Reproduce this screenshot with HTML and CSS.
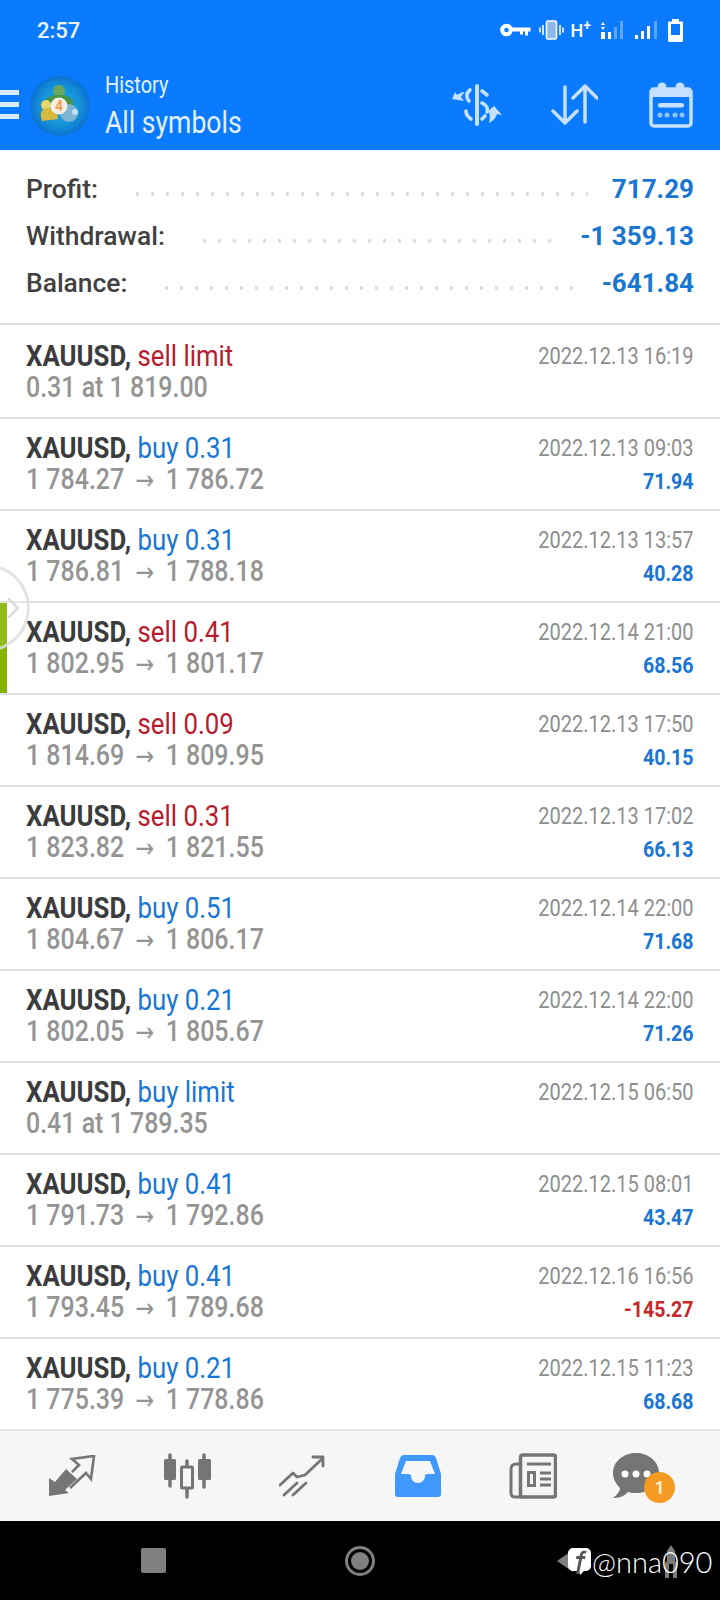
FILE: index.html
```html
<!DOCTYPE html>
<html>
  <head>
    <title>History</title>
    <meta charset="UTF-8"/>
    <link rel="stylesheet" href="styles.css">
  </head>
  <body>
    <div id="screen">
      <header id="top">
        <div class="status">
          <span class="clock">2:57</span>
          <div class="status-icons">
            <svg width="31" height="14" viewBox="0 0 31 14"><circle cx="6.500" cy="7" r="4.300" fill="none" stroke="#fff" stroke-width="4"/><path d="M11 4.500h19.500v4h-2.500v4h-3v-4h-2v3h-3v-3h-9z" fill="#fff"/></svg>
            <svg width="25" height="20" viewBox="0 0 25 20"><rect x="7.500" y="1" width="10" height="18" rx="1.500" fill="#8db8ec" stroke="#fff" stroke-width="1.600"/><path d="M4 5v10M1 7.500v5M21 5v10M24 7.500v5" stroke="#fff" stroke-width="1.600" fill="none"/></svg>
            <span class="net">H<sup>+</sup></span>
            <svg class="sig1" width="22" height="20" viewBox="0 0 22 20"><path d="M0 12h4v7h-4zM0 5l2-3 2 3zM0 7l2 3 2-3z" fill="#fff"/><path d="M7 12h3v7h-3z" fill="#fff"/><path d="M13 7h3v12h-3zM19 1h3v18h-3z" fill="#5ea6f5"/></svg>
            <svg class="sig2" width="22" height="20" viewBox="0 0 22 20"><path d="M0 15h3v4h-3zM6 11h3v8h-3zM12 6h3v13h-3z" fill="#fff"/><path d="M19 1h3v18h-3z" fill="#5ea6f5"/></svg>
            <svg class="batt" width="15" height="23" viewBox="0 0 15 23"><path d="M4 0h7v2.500h3a1 1 0 0 1 1 1v18a1.500 1.500 0 0 1-1.500 1.500h-12a1.500 1.500 0 0 1-1.500-1.500v-18a1 1 0 0 1 1-1h3z" fill="#fff"/><rect x="3" y="5" width="9" height="11" fill="#0a7bff"/></svg>
          </div>
        </div>
        <div class="toolbar">
          <div class="burger"><i></i><i></i><i></i></div>
          <svg class="logo" width="60" height="60" viewBox="0 0 60 60">
            <defs>
              <radialGradient id="lg" cx="50%" cy="50%" r="52%"><stop offset="0" stop-color="#22b0dc"/><stop offset=".65" stop-color="#1590d8"/><stop offset="1" stop-color="#0c6ed0"/></radialGradient>
            </defs>
            <circle cx="30" cy="30" r="30" fill="url(#lg)"/>
            <circle cx="29" cy="15" r="6" fill="#6aa860"/>
            <path d="M14 31c0-9 6-12 15-12s15 3 15 12z" fill="#4a9448"/>
            <circle cx="16" cy="29" r="5" fill="#e8d468"/>
            <path d="M12 45c-3-9 0-13 6-13s10 5 10 11z" fill="#d6ba3e"/>
            <circle cx="39" cy="37" r="9" fill="#7db4d4"/>
            <circle cx="45" cy="36" r="3" fill="#c2e2f2"/>
            <circle cx="29" cy="30" r="8.500" fill="#f4efe6"/>
            <text x="29" y="35" class="logo-num">4</text>
          </svg>
          <div class="titles">
            <div class="sub">History</div>
            <div class="main">All symbols</div>
          </div>
          <div class="actions">
            <svg width="50" height="42" viewBox="0 0 50 42" fill="none" stroke="#c6e0ff" stroke-linecap="round">
              <path d="M25 2v38" stroke-width="4"/>
              <path d="M18 6c-4 3-4 8-1 11M30 7l5 4M30 19c5 2 6 6 5 9M14 27c0 3 2 6 5 8M30 35l3-3" stroke-width="3.600"/>
              <path d="M0 15l12 2-3-4c1-2 2-3 4-5-4 0-6 2-8 3l-2-3z" fill="#c6e0ff" stroke="none"/>
              <path d="M42 22l8 9-5-1c-1 4-4 7-8 9 1-4 1-7 0-11l-4 2z" fill="#c6e0ff" stroke="none"/>
            </svg>
            <svg class="updown" width="47" height="42" viewBox="0 0 47 42" fill="none" stroke="#c6e0ff" stroke-width="3.500" stroke-linecap="round" stroke-linejoin="round">
              <path d="M14 3v36M2 27l12 12 12-12"/>
              <path d="M34 38V2M22 14L34 2l12 12"/>
            </svg>
            <svg width="44" height="46" viewBox="0 0 44 46">
              <rect x="2" y="7" width="40" height="37" rx="3" fill="none" stroke="#c6e0ff" stroke-width="3.500"/>
              <circle cx="13" cy="5" r="4.500" fill="#c6e0ff"/>
              <circle cx="31" cy="5" r="4.500" fill="#c6e0ff"/>
              <rect x="2" y="8" width="40" height="7" fill="#c6e0ff"/>
              <rect x="9" y="21" width="26" height="4.500" rx="2" fill="#c6e0ff"/>
              <circle cx="11" cy="33" r="2.500" fill="#8fc2fb"/><circle cx="18" cy="33" r="2.500" fill="#8fc2fb"/><circle cx="26" cy="33" r="2.500" fill="#8fc2fb"/><circle cx="33" cy="33" r="2.500" fill="#8fc2fb"/>
            </svg>
          </div>
        </div>
      </header>

      <section id="summary">
        <div class="sum-row"><span class="sum-label">Profit:</span><span class="dots"></span><span class="sum-val">717.29</span></div>
        <div class="sum-row"><span class="sum-label">Withdrawal:</span><span class="dots"></span><span class="sum-val">-1 359.13</span></div>
        <div class="sum-row"><span class="sum-label">Balance:</span><span class="dots"></span><span class="sum-val">-641.84</span></div>
      </section>

      <main id="deals">
        <div class="deal">
          <div class="left"><div class="l1"><b>XAUUSD,</b> <span class="red">sell limit</span></div><div class="l2">0.31 at 1 819.00</div></div>
          <div class="right"><div class="date">2022.12.13 16:19</div></div>
        </div>
        <div class="deal">
          <div class="left"><div class="l1"><b>XAUUSD,</b> <span class="blue">buy 0.31</span></div><div class="l2">1 784.27 <em>→</em> 1 786.72</div></div>
          <div class="right"><div class="date">2022.12.13 09:03</div><div class="pl">71.94</div></div>
        </div>
        <div class="deal">
          <div class="left"><div class="l1"><b>XAUUSD,</b> <span class="blue">buy 0.31</span></div><div class="l2">1 786.81 <em>→</em> 1 788.18</div></div>
          <div class="right"><div class="date">2022.12.13 13:57</div><div class="pl">40.28</div></div>
        </div>
        <div class="deal">
          <div class="left"><div class="l1"><b>XAUUSD,</b> <span class="red">sell 0.41</span></div><div class="l2">1 802.95 <em>→</em> 1 801.17</div></div>
          <div class="right"><div class="date">2022.12.14 21:00</div><div class="pl">68.56</div></div>
          <div class="green-bar"></div>
        </div>
        <div class="deal">
          <div class="left"><div class="l1"><b>XAUUSD,</b> <span class="red">sell 0.09</span></div><div class="l2">1 814.69 <em>→</em> 1 809.95</div></div>
          <div class="right"><div class="date">2022.12.13 17:50</div><div class="pl">40.15</div></div>
        </div>
        <div class="deal">
          <div class="left"><div class="l1"><b>XAUUSD,</b> <span class="red">sell 0.31</span></div><div class="l2">1 823.82 <em>→</em> 1 821.55</div></div>
          <div class="right"><div class="date">2022.12.13 17:02</div><div class="pl">66.13</div></div>
        </div>
        <div class="deal">
          <div class="left"><div class="l1"><b>XAUUSD,</b> <span class="blue">buy 0.51</span></div><div class="l2">1 804.67 <em>→</em> 1 806.17</div></div>
          <div class="right"><div class="date">2022.12.14 22:00</div><div class="pl">71.68</div></div>
        </div>
        <div class="deal">
          <div class="left"><div class="l1"><b>XAUUSD,</b> <span class="blue">buy 0.21</span></div><div class="l2">1 802.05 <em>→</em> 1 805.67</div></div>
          <div class="right"><div class="date">2022.12.14 22:00</div><div class="pl">71.26</div></div>
        </div>
        <div class="deal">
          <div class="left"><div class="l1"><b>XAUUSD,</b> <span class="blue">buy limit</span></div><div class="l2">0.41 at 1 789.35</div></div>
          <div class="right"><div class="date">2022.12.15 06:50</div></div>
        </div>
        <div class="deal">
          <div class="left"><div class="l1"><b>XAUUSD,</b> <span class="blue">buy 0.41</span></div><div class="l2">1 791.73 <em>→</em> 1 792.86</div></div>
          <div class="right"><div class="date">2022.12.15 08:01</div><div class="pl">43.47</div></div>
        </div>
        <div class="deal">
          <div class="left"><div class="l1"><b>XAUUSD,</b> <span class="blue">buy 0.41</span></div><div class="l2">1 793.45 <em>→</em> 1 789.68</div></div>
          <div class="right"><div class="date">2022.12.16 16:56</div><div class="pl loss">-145.27</div></div>
        </div>
        <div class="deal">
          <div class="left"><div class="l1"><b>XAUUSD,</b> <span class="blue">buy 0.21</span></div><div class="l2">1 775.39 <em>→</em> 1 778.86</div></div>
          <div class="right"><div class="date">2022.12.15 11:23</div><div class="pl">68.68</div></div>
        </div>
      </main>

      <div id="handle"><svg width="12" height="22" viewBox="0 0 12 22"><path d="M1.500 1.500l9 9.500-9 9.500" fill="none" stroke="#d8d8d8" stroke-width="2.500"/></svg></div>

      <nav id="tabs">
        <svg width="48" height="42" viewBox="0 0 48 42" fill="none" stroke="#757575">
          <path d="M1 41V23l6 4 11-13 11 10-12 11 4 3z" fill="#757575" stroke="none"/>
          <path d="M24 17l7-7-7-6 22-3-3 23-5-6-16 15" stroke-width="2.600"/>
        </svg>
        <svg width="48" height="46" viewBox="0 0 48 46" fill="#757575" stroke="#757575">
          <path d="M7 2v31M24 8v36M41 2v32" stroke-width="3.500" fill="none" stroke-linecap="round"/>
          <rect x="1" y="6" width="12" height="21" rx="1.500" stroke="none"/>
          <rect x="18.500" y="14" width="11" height="21" rx="1" fill="#f6f6f6" stroke-width="3"/>
          <rect x="35" y="6" width="13" height="21" rx="1.500" stroke="none"/>
        </svg>
        <svg width="46" height="42" viewBox="0 0 46 42" fill="none" stroke="#757575" stroke-width="2.800" stroke-linecap="round" stroke-linejoin="round">
          <path d="M1 30l13-12 4 4 8-2 18-17M34 2h10v9"/>
          <path d="M5 40l13-12M14 40l13-12" />
        </svg>
        <svg width="46" height="42" viewBox="0 0 46 42">
          <path d="M9 0h28c2 0 3 1 4 3l5 16v20c0 2-1 3-3 3h-40c-2 0-3-1-3-3v-20l5-16c1-2 2-3 4-3z" fill="#3f98fb"/>
          <path d="M11 6h24l5 13h-8c-1 0-2 1-2 2 0 4-3 7-7 7s-7-3-7-7c0-1-1-2-2-2h-8z" fill="#f6f6f6"/>
        </svg>
        <svg width="48" height="46" viewBox="0 0 48 46" fill="none" stroke="#757575">
          <rect x="11.500" y="2" width="35" height="42" rx="2" stroke-width="3.500"/>
          <path d="M11 11h-4c-3 0-5 2-5 5v24c0 3 2 4 4 4h8" stroke-width="3"/>
          <path d="M18 11h24" stroke-width="3"/>
          <rect x="18" y="18" width="9" height="16" fill="#757575" stroke="none"/>
          <rect x="21" y="21" width="3" height="10" fill="#f6f6f6" stroke="none"/>
          <path d="M31 20h11M31 26h11M31 32h11" stroke-width="3"/>
        </svg>
        <div class="chat">
          <svg width="46" height="46" viewBox="0 0 46 46">
            <path d="M23 0c12 0 23 8 23 20s-10 20-23 20c-3 0-5 0-8-1-3 3-7 6-14 6-1 0-1-1 0-1 3-2 6-6 6-9-4-4-7-9-7-15 0-12 11-20 23-20z" fill="#757575"/>
            <circle cx="12" cy="21" r="3.500" fill="#fff"/><circle cx="23" cy="21" r="3.500" fill="#fff"/><circle cx="34" cy="21" r="3.500" fill="#fff"/>
          </svg>
          <span class="badge">1</span>
        </div>
      </nav>

      <footer id="sysnav">
        <span class="recent"></span>
        <span class="home"></span>
        <span class="back"></span>
        <svg class="person" width="12" height="33" viewBox="0 0 12 33"><path d="M6 0l4 6v10l2 2v15h-4v-14h-4v14h-4v-15l2-2v-10z" fill="#7a7a7a"/></svg>
        <div class="mark">
          <svg width="25" height="29" viewBox="0 0 25 29"><path d="M6 1h13a5 5 0 0 1 5 5v13a5 5 0 0 1-5 5h-2l-4 4-1-4h-6a5 5 0 0 1-5-5v-13a5 5 0 0 1 5-5z" fill="#fff"/><path d="M9 27l3-15h-3l.500-3h3c1-5 3-6 7-5l-.500 2.500c-3-.500-3 .500-3.500 2.500h3l-.500 3h-3l-3 15z" fill="#555"/></svg>
          <span>@nna090</span>
        </div>
      </footer>
    </div>
  </body>
</html>
```
FILE: styles.css
```css
body {
  margin: 0;
  font-family: "Roboto", sans-serif;
  background-color: white;
}
#screen {
  position: relative;
  width: 720px;
  height: 1600px;
  overflow: hidden;
  display: flex;
  flex-direction: column;
}

/* header */
#top {
  height: 150px;
  flex: none;
  background-color: #0a7bff;
  color: white;
}
.status {
  display: flex;
  align-items: center;
  justify-content: space-between;
  height: 60px;
  padding: 0 37px;
}
.clock {
  font-size: 22px;
  font-weight: 500;
  color: #eaf5ff;
}
.status-icons {
  display: flex;
  align-items: center;
  gap: 8px;
}
.net {
  font-size: 18px;
  font-weight: 500;
  margin-left: -2px;
}
.net sup {
  font-size: 14px;
  line-height: 0;
}
.sig1 {
  margin-left: 2px;
}
.sig2 {
  margin-left: 4px;
}
.batt {
  margin-left: 3px;
}
.toolbar {
  display: flex;
  align-items: center;
  height: 90px;
}
.burger {
  width: 19px;
  display: flex;
  flex-direction: column;
  gap: 7px;
  margin-top: -1px;
}
.burger i {
  display: block;
  height: 5px;
  background-color: #d9ecff;
}
.logo {
  margin: 0 0 -1px 11px;
}
.logo-num {
  font-size: 14px;
  font-weight: 700;
  fill: #f0a050;
  text-anchor: middle;
}
.titles {
  margin: 2px 0 0 15px;
  color: #e3f1ff;
  transform: scaleX(.83);
  transform-origin: left center;
}
.sub {
  font-size: 24px;
  line-height: 32px;
  margin-top: -2px;
}
.main {
  font-size: 32px;
  line-height: 40px;
  margin-top: 1px;
}
.actions {
  display: flex;
  align-items: center;
  margin-left: auto;
  padding-right: 27px;
  gap: 51px;
}
.updown {
  margin-left: -2px;
}

/* summary */
#summary {
  height: 175px;
  flex: none;
  padding: 15px 26px 0;
  box-sizing: border-box;
  border-bottom: 2px solid #e0e0e0;
}
.sum-row {
  display: flex;
  align-items: center;
  height: 47px;
  font-size: 26.400px;
  font-weight: 500;
  color: #414141;
}
.dots {
  flex: 1;
  height: 4px;
  margin: 10px 24px 0 32px;
  background-image: radial-gradient(circle, #dcdcdc 1.7px, transparent 2px);
  background-size: 15px 4px;
  background-repeat: repeat-x;
}
.sum-val {
  color: #1976d2;
  font-weight: 700;
  font-size: 26px;
}

/* deals list */
#deals {
  flex: 1;
  min-height: 0;
  overflow: hidden;
}
.deal {
  position: relative;
  height: 92px;
  box-sizing: border-box;
  padding: 12px 26px 0;
  display: flex;
  justify-content: space-between;
  border-bottom: 2px solid #e0e0e0;
}
.deal:first-child {
  height: 94px;
  padding-top: 14px;
}
.deal:last-child {
  border-bottom: 0;
}
.left {
  transform: scaleX(.86);
  transform-origin: left top;
  white-space: nowrap;
}
.right {
  text-align: right;
  transform: scaleX(.87);
  transform-origin: right top;
  white-space: nowrap;
  padding-top: 1px;
}
.l1 {
  font-size: 30px;
  line-height: 33px;
  color: #3c3c3c;
}
.l1 b {
  font-weight: 700;
}
.red {
  color: #b71c2c;
}
.blue {
  color: #1976d2;
}
.l2 {
  font-size: 29px;
  line-height: 31px;
  font-weight: 500;
  color: #949494;
}
.l2 em {
  font-style: normal;
  font-weight: 400;
  font-size: 26px;
  font-family: "DejaVu Sans", sans-serif;
  padding: 0 6px;
}
.date {
  font-size: 23px;
  line-height: 33px;
  color: #8e8e8e;
}
.pl {
  font-size: 22.500px;
  line-height: 31px;
  margin-top: 1px;
  font-weight: 700;
  color: #1976d2;
}
.pl.loss {
  color: #c62828;
}
.green-bar {
  position: absolute;
  left: 0;
  top: 0;
  width: 7px;
  height: 90px;
  background-color: #86b300;
}

/* floating handle */
#handle {
  position: absolute;
  left: -58px;
  top: 564px;
  width: 88px;
  height: 88px;
  box-sizing: border-box;
  border: 3px solid rgba(222, 222, 222, .85);
  border-radius: 50%;
  background-color: rgba(255, 255, 255, .1);
  display: flex;
  align-items: center;
  justify-content: flex-end;
  padding-right: 8px;
}

/* bottom tabs */
#tabs {
  height: 92px;
  background-color: #f6f6f6;
  border-top: 2px solid #e6e6e6;
  box-sizing: border-box;
  display: grid;
  grid-template-columns: repeat(6, 115.300px);
  padding-left: 14px;
  align-items: center;
  justify-items: center;
  flex: none;
}
.chat {
  position: relative;
  height: 46px;
  margin-right: 24px;
}
.badge {
  position: absolute;
  left: 31px;
  top: 19px;
  width: 31px;
  height: 31px;
  border-radius: 50%;
  background-color: #f59a23;
  color: #ffeecb;
  font-size: 18px;
  font-weight: 700;
  display: flex;
  align-items: center;
  justify-content: center;
}

/* system nav */
#sysnav {
  position: relative;
  height: 79px;
  flex: none;
  background-color: black;
  display: flex;
  align-items: center;
}
.recent {
  width: 25px;
  height: 25px;
  margin-left: 141px;
  background-color: #808080;
  border-radius: 2px;
}
.home {
  width: 18px;
  height: 18px;
  margin-left: 185px;
  border-radius: 50%;
  background-color: #808080;
  box-shadow: 0 0 0 3px black, 0 0 0 6px #808080;
}
.back {
  width: 0;
  height: 0;
  margin-left: 188px;
  border-style: solid;
  border-width: 11px 16px 11px 0;
  border-color: transparent #808080 transparent transparent;
}
.person {
  position: absolute;
  left: 665px;
  top: 24px;
}
.mark {
  position: absolute;
  left: 567px;
  top: 23px;
  display: flex;
  align-items: center;
  font-family: "Lato", sans-serif;
  font-weight: 300;
  font-size: 29px;
  color: white;
}
```
